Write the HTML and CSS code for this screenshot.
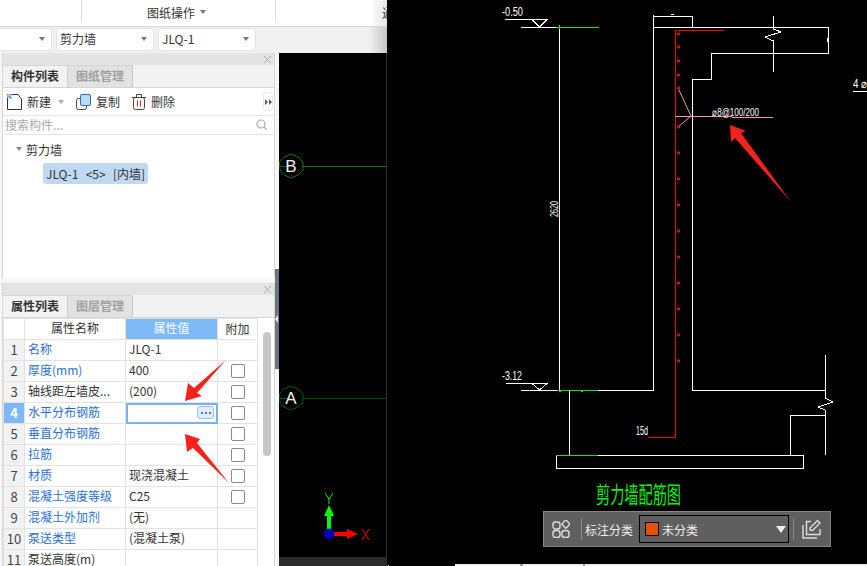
FILE: index.html
```html
<!DOCTYPE html>
<html lang="en">
<head>
    <meta charset="UTF-8">
    <title>剪力墙配筋</title>
    <link rel="stylesheet" href="styles.css">
</head>
<body>
    <div class="app">
        <div class="left-pane">
            <div class="menu-bar">
                <div class="menu-group menu-first"></div>
                <div class="menu-group menu-second">图纸操作<span class="caret caret-menu"></span></div>
                <div class="menu-group menu-third"><span class="menu-cut">通</span></div>
            </div>
            <div class="select-bar">
                <div class="select select-first"><span class="caret"></span></div>
                <div class="select"><span>剪力墙</span><span class="caret"></span></div>
                <div class="select"><span>JLQ-1</span><span class="caret"></span></div>
            </div>
            <div class="work-area">
                <div class="side">
                    <section class="panel panel-list">
                        <div class="panel-head">
                            <svg width="7" height="7" viewBox="0 0 7 7"><path d="M0 0l7 7M7 0L0 7" stroke="#aaa"/></svg>
                        </div>
                        <div class="tabs">
                            <div class="tab active">构件列表</div>
                            <div class="tab">图纸管理</div>
                        </div>
                        <div class="tools">
                            <div class="tool">
                                <svg class="tool-icon" width="15" height="16" viewBox="0 0 15 16">
                                    <path d="M.5 4V15.5H14.5V5L11 .5H5" fill="none" stroke="#333"/>
                                    <path d="M0 0h1.5v1.5H0zM3 0h1.5v1.5H3zM1.5 1.5H3V3H1.5zM0 3h1.5v1.5H0zM3 3h1.5v1.5H3z" fill="#3b7fd9"/>
                                    <path d="M1.5 0H3v1.5H1.5zM0 1.5h1.5V3H0zM3 1.5h1.5V3H3zM1.5 3H3v1.5H1.5z" fill="#a9c8f0"/>
                                </svg>
                                <span>新建</span><span class="caret caret-tool"></span>
                            </div>
                            <div class="tool">
                                <svg class="tool-icon" width="15" height="16" viewBox="0 0 15 16">
                                    <rect x="0.5" y="4.5" width="10" height="11" rx="2" fill="#fff" stroke="#444"/>
                                    <rect x="4.5" y="0.5" width="10" height="11" rx="1.5" fill="#bcd9f7" stroke="#2a6fc9"/>
                                </svg>
                                <span>复制</span>
                            </div>
                            <div class="tool">
                                <svg class="tool-icon" width="14" height="16" viewBox="0 0 14 16">
                                    <path d="M0 3.5h14M4.5 3V.5h5V3" fill="none" stroke="#444"/>
                                    <rect x="1.5" y="3.5" width="11" height="12" rx="2" fill="none" stroke="#444"/>
                                    <path d="M5.5 6.5v6M8.5 6.5v6" stroke="#e02020"/>
                                </svg>
                                <span>删除</span>
                            </div>
                            <div class="more">
                                <svg width="7" height="6" viewBox="0 0 7 6"><path d="M0 0l3 3-3 3zM4 0l3 3-3 3z" fill="#555"/></svg>
                            </div>
                        </div>
                        <div class="search">
                            <span>搜索构件...</span>
                            <svg width="11" height="11" viewBox="0 0 11 11">
                                <circle cx="5" cy="5" r="4" fill="none" stroke="#aaa" stroke-width="1.2"/>
                                <path d="M8 8l2.5 2.5" stroke="#aaa" stroke-width="1.2"/>
                            </svg>
                        </div>
                        <div class="tree">
                            <div class="tree-root"><span class="caret caret-tree"></span>剪力墙</div>
                            <div class="tree-item">JLQ-1 &nbsp;&lt;5&gt; &nbsp;[内墙]</div>
                        </div>
                    </section>
                    <section class="panel panel-props">
                        <div class="panel-head">
                            <svg width="7" height="7" viewBox="0 0 7 7"><path d="M0 0l7 7M7 0L0 7" stroke="#aaa"/></svg>
                        </div>
                        <div class="tabs">
                            <div class="tab active">属性列表</div>
                            <div class="tab">图层管理</div>
                        </div>
                        <div class="props">
                            <table class="prop-table">
                                <tr class="head-row">
                                    <th class="num"></th><th class="name">属性名称</th><th class="value current">属性值</th><th class="extra">附加</th>
                                </tr>
                                <tr><td class="num">1</td><td class="name link">名称</td><td class="value">JLQ-1</td><td></td></tr>
                                <tr><td class="num">2</td><td class="name link">厚度(mm)</td><td class="value">400</td><td class="extra"><span class="check"></span></td></tr>
                                <tr><td class="num">3</td><td class="name">轴线距左墙皮...</td><td class="value">(200)</td><td class="extra"><span class="check"></span></td></tr>
                                <tr>
                                    <td class="num current">4</td><td class="name link">水平分布钢筋</td>
                                    <td class="value editing">
                                        <span class="dots"><svg width="10" height="2" viewBox="0 0 10 2"><path d="M0 0h2v2H0zM4 0h2v2H4zM8 0h2v2H8z" fill="#3b7fd9"/></svg></span>
                                    </td>
                                    <td class="extra"><span class="check"></span></td>
                                </tr>
                                <tr><td class="num">5</td><td class="name link">垂直分布钢筋</td><td class="value"></td><td class="extra"><span class="check"></span></td></tr>
                                <tr><td class="num">6</td><td class="name link">拉筋</td><td class="value"></td><td class="extra"><span class="check"></span></td></tr>
                                <tr><td class="num">7</td><td class="name link">材质</td><td class="value">现浇混凝土</td><td class="extra"><span class="check"></span></td></tr>
                                <tr><td class="num">8</td><td class="name link">混凝土强度等级</td><td class="value">C25</td><td class="extra"><span class="check"></span></td></tr>
                                <tr><td class="num">9</td><td class="name link">混凝土外加剂</td><td class="value">(无)</td><td></td></tr>
                                <tr><td class="num">10</td><td class="name link">泵送类型</td><td class="value">(混凝土泵)</td><td></td></tr>
                                <tr><td class="num">11</td><td class="name">泵送高度(m)</td><td class="value"></td><td></td></tr>
                            </table>
                            <div class="scroll-track"><div class="scroll-thumb"></div></div>
                        </div>
                    </section>
                </div>
                <div class="splitter">
                    <div class="splitter-grip"><span class="grip-arrow"></span></div>
                </div>
                <div class="axis-view">
                    <svg class="axis-svg" viewBox="279 53 108 513" width="108" height="513">
                        <path d="M302 166.5H386" stroke="#0a7a0a"/>
                        <path d="M302 398.5H386" stroke="#0a4a0a"/>
                        <path d="M386.5 53V557" stroke="#143a20"/>
                        <path d="M280 166.5h11M280 398.5h11" stroke="#0a6a0a"/>
                        <polygon points="291,154 298,157 303,162 303,170 298,175 291,178 284,175 280,170 279.5,162 284,157" fill="none" stroke="#0a7a0a"/>
                        <polygon points="291,386 298,389 303,394 303,402 298,407 291,410 284,407 280,402 279.5,394 284,389" fill="none" stroke="#0a5a0a"/>
                        <text x="291" y="172" class="axis-label">B</text>
                        <text x="291" y="404" class="axis-label">A</text>
                        <rect x="331" y="532" width="18" height="4" fill="#f00"/>
                        <path d="M347 529l11 5-11 5z" fill="#f00"/>
                        <rect x="327" y="514" width="4" height="17" fill="#0f0"/>
                        <path d="M329 505l5 11h-10z" fill="#0f0"/>
                        <circle cx="329" cy="534" r="5.5" fill="#0000b0"/>
                        <path d="M325 493l4 6 4-6M329 499v5" fill="none" stroke="#0f0"/>
                        <path d="M362 529l7 11M369 529l-7 11" fill="none" stroke="#f00"/>
                        <rect x="279" y="557" width="108" height="9" fill="#2b2b2b"/>
                    </svg>
                </div>
            </div>
        </div>
        <div class="cad-view">
            <svg class="cad-svg" viewBox="387 0 480 566" width="480" height="566">
                <g class="line-white">
                    <path d="M505 19.5H547L539.5 27L532 19.5"/>
                    <path d="M521 27.5H560M559.5 27V390M653.5 15V390M521 390.5H653.5"/>
                    <path d="M653 16.5H692.5V27M653 27.5H828.5V53.5H711.5V79.5H692.5V390.5H825"/>
                    <path d="M773.5 16V29L781 32L765 37L773.5 41V72"/>
                    <path d="M506 383.5H547L539.5 390L532 383.5"/>
                    <path d="M569.5 390V455"/>
                    <rect x="556.5" y="455.5" width="247" height="13"/>
                    <path d="M790.5 455V415.5H825M825 355V398L833 402L818 407L825 410V455"/>
                    <path d="M853 91.5H867"/>
                    <path d="M671 14.5h3M827 38v4"/>
                </g>
                <g class="line-green">
                    <path d="M556 27.5H599M557 390.5H598M556 455.5H598M559 25v4M558 390l3 2M580 390l3 2"/>
                </g>
                <g class="line-red">
                    <path d="M724 30.5H675.5V437.5H648"/>
                </g>
                <g class="line-pink">
                    <path d="M678 88L691 116L678 127M675 116.5H732M732 117.5H773"/>
                </g>
                <g class="rebar-dots">
                    <circle cx="678.5" cy="34" r="1.2"/><circle cx="678.5" cy="47" r="1.2"/>
                    <circle cx="678.5" cy="61" r="1.2"/><circle cx="678.5" cy="75" r="1.2"/>
                    <circle cx="678.5" cy="88" r="1.2"/><circle cx="678.5" cy="127" r="1.2"/>
                    <circle cx="678.5" cy="153" r="1.2"/><circle cx="678.5" cy="179" r="1.2"/>
                    <circle cx="678.5" cy="205" r="1.2"/><circle cx="678.5" cy="231" r="1.2"/>
                    <circle cx="678.5" cy="257" r="1.2"/><circle cx="678.5" cy="283" r="1.2"/>
                    <circle cx="678.5" cy="309" r="1.2"/><circle cx="678.5" cy="335" r="1.2"/>
                    <circle cx="678.5" cy="361" r="1.2"/>
                </g>
                <g class="cad-text">
                    <text x="502" y="16" textLength="21" lengthAdjust="spacingAndGlyphs">-0.50</text>
                    <text x="502" y="380" textLength="20" lengthAdjust="spacingAndGlyphs">-3.12</text>
                    <text x="712" y="115.5" class="cad-small" textLength="47" lengthAdjust="spacingAndGlyphs">⌀8@100/200</text>
                    <text x="636" y="435" textLength="12" lengthAdjust="spacingAndGlyphs">15d</text>
                    <text x="853" y="88" textLength="14" lengthAdjust="spacingAndGlyphs">4 ⌀</text>
                    <text transform="translate(558 217) rotate(-90)" class="cad-small" textLength="16" lengthAdjust="spacingAndGlyphs">2620</text>
                </g>
                <text class="cad-title" x="596" y="503" textLength="85" lengthAdjust="spacingAndGlyphs">剪力墙配筋图</text>
                <polygon points="730,125 746,131 741,133 791,202 735,138 731,142" fill="#f5211b"/>
                <rect x="455" y="564" width="412" height="2" fill="#eeeeee"/>
                <path d="M520 564h3v2h-3zM583 564h2v2h-2z" fill="#999"/>
                <rect x="388" y="565" width="1" height="1" fill="#ddd"/>
            </svg>
            <div class="mark-bar">
                <svg class="bar-icon" width="18" height="18" viewBox="0 0 18 18">
                    <g fill="none" stroke="#ddd" stroke-width="1.4">
                        <rect x="1" y="2" width="7" height="7" rx="2.5"/>
                        <rect x="10.5" y="1" width="6" height="6" rx="1" transform="rotate(45 13.5 4.5)"/>
                        <rect x="1" y="10.5" width="7" height="7" rx="2.5"/>
                        <rect x="10" y="10.5" width="7" height="7" rx="2.5"/>
                    </g>
                </svg>
                <span class="bar-sep"></span>
                <span class="bar-label">标注分类</span>
                <div class="bar-select">
                    <span class="swatch"></span>
                    <span class="bar-value">未分类</span>
                    <span class="bar-caret"></span>
                </div>
                <span class="bar-sep"></span>
                <svg class="bar-icon" width="20" height="20" viewBox="0 0 20 20">
                    <g fill="none" stroke="#ddd" stroke-width="1.4">
                        <path d="M9 2.5H4.5V15.5H18V10"/>
                        <path d="M1 6V19H15"/>
                        <path d="M8 11V9L15.5 1.5L18 4L10.5 11.5Z"/>
                    </g>
                </svg>
            </div>
        </div>
        <svg class="arrows" viewBox="0 0 867 566" width="867" height="566">
            <polygon points="185,401 188,383 194,388 226,360 197,393 202,396" fill="#f5211b"/>
            <polygon points="185,434 200,439 197,443 229,483 193,448 187,452" fill="#f5211b"/>
        </svg>
    </div>
</body>
</html>
```

FILE: styles.css
```css
* {
    box-sizing: border-box;
}

body {
    margin: 0;
    width: 867px;
    height: 566px;
    overflow: hidden;
    font-family: "Noto Sans CJK SC", "Noto Sans", sans-serif;
    font-size: 12px;
    color: #333;
    background: #000;
}

.app {
    position: relative;
    display: flex;
    width: 867px;
    height: 566px;
}

.left-pane {
    width: 387px;
    height: 566px;
    display: flex;
    flex-direction: column;
    flex: none;
    overflow: hidden;
}

.menu-bar {
    height: 27px;
    flex: none;
    display: flex;
    background: linear-gradient(to right, #fff 370px, #e4e4e4 387px);
    border-bottom: 1px solid #d8d8d8;
}

.menu-group {
    height: 22px;
    display: flex;
    align-items: center;
    border-right: 1px solid #dcdcdc;
}

.menu-first {
    width: 82px;
}

.menu-second {
    width: 194px;
    padding-left: 65px;
    padding-top: 2px;
}

.menu-third {
    flex: 1;
    border-right: none;
    justify-content: flex-end;
    padding-top: 2px;
}

.menu-cut {
    width: 5px;
    overflow: hidden;
    white-space: nowrap;
}

.caret {
    display: inline-block;
    width: 0;
    height: 0;
    border-left: 3.5px solid transparent;
    border-right: 3.5px solid transparent;
    border-top: 4px solid #777;
}

.caret-menu {
    margin-left: 5px;
}

.select-bar {
    height: 26px;
    flex: none;
    display: flex;
    gap: 4px;
    padding-top: 1px;
    background: linear-gradient(to right, #f0f0f0 370px, #c4c4c4 387px);
}

.select {
    width: 98px;
    height: 23px;
    padding: 0 6px 2px 3px;
    display: flex;
    align-items: center;
    justify-content: space-between;
    background: #fff;
    border: 1px solid #e2e2e2;
    border-radius: 4px;
}

.select-first {
    width: 52px;
    justify-content: flex-end;
    border-left: none;
    border-radius: 0 4px 4px 0;
}

.work-area {
    flex: 1;
    display: flex;
    min-height: 0;
}

.side {
    width: 275px;
    flex: none;
    padding-left: 2px;
    display: flex;
    flex-direction: column;
    gap: 5px;
    background: #f6f6f6;
}

.panel {
    display: flex;
    flex-direction: column;
    background: #fff;
    border-right: 1px solid #d6d6d6;
    border-left: 1px solid #d6d6d6;
    overflow: hidden;
}

.panel-list {
    height: 225px;
    flex: none;
}

.panel-props {
    flex: 1;
    min-height: 0;
}

.panel-head {
    height: 12px;
    flex: none;
    display: flex;
    justify-content: flex-end;
    align-items: center;
    padding-right: 3px;
    background: #e4e4e4;
}

.tabs {
    height: 23px;
    flex: none;
    display: flex;
    background: #f2f2f2;
    border-bottom: 1px solid #d6d6d6;
}

.tab {
    width: 65px;
    padding-bottom: 2px;
    display: flex;
    align-items: center;
    justify-content: center;
    font-weight: 700;
    color: #a0a0a0;
    background: #e2e2e2;
    border-right: 1px solid #c8c8c8;
    border-top: 1px solid #d6d6d6;
}

.tab.active {
    color: #333;
    background: #f2f2f2;
    border-right: 1px solid #d0d0d0;
}

.tools {
    height: 28px;
    flex: none;
    display: flex;
    align-items: center;
    padding-left: 4px;
    gap: 12px;
    border-bottom: 1px solid #e4e4e4;
}

.tool {
    display: flex;
    align-items: center;
    gap: 5px;
}

.caret-tool {
    margin-left: 2px;
    border-top-color: #aaa;
}

.more {
    width: 10px;
    height: 19px;
    margin-left: auto;
    margin-right: 1px;
    display: flex;
    align-items: center;
    justify-content: center;
    border: 1px solid #e8e8e8;
    border-radius: 3px;
}

.search {
    height: 19px;
    flex: none;
    display: flex;
    align-items: center;
    justify-content: space-between;
    padding: 0 7px 2px 2px;
    color: #aaa;
    border-bottom: 1px solid #e4e4e4;
}

.tree {
    flex: 1;
    padding-top: 5px;
}

.tree-root {
    height: 20px;
    padding: 0 0 2px 13px;
    display: flex;
    align-items: center;
}

.caret-tree {
    margin-right: 4px;
    border-top-color: #888;
}

.tree-item {
    width: 105px;
    height: 21px;
    margin: 3px 0 0 40px;
    padding: 0 0 1px 3px;
    display: flex;
    align-items: center;
    white-space: nowrap;
    word-spacing: 1px;
    border-radius: 3px;
    background: #bfd9f2;
}

.props {
    position: relative;
    flex: 1;
    display: flex;
    min-height: 0;
    overflow: hidden;
}

.prop-table {
    width: 255px;
    flex: none;
    table-layout: fixed;
    border-collapse: collapse;
    align-self: flex-start;
}

.prop-table tr {
    height: 21px;
}

.prop-table th,
.prop-table td {
    padding: 0 3px 2px;
    font-weight: 400;
    white-space: nowrap;
    border: 1px solid #e2e2e2;
    line-height: 18px;
}

.prop-table .num {
    width: 21px;
    padding: 0 0 1px;
    text-align: center;
    font-size: 13px;
    color: #444;
    background: #f2f2f2;
}

.prop-table th.num {
    background: #fff;
}

.prop-table .name {
    width: 101px;
}

.prop-table th.name {
    text-align: center;
}

.prop-table .value {
    width: 92px;
}

.prop-table th.current {
    text-align: center;
    color: #fff;
    background: #7db9f7;
}

.prop-table td.num.current {
    font-weight: 700;
    color: #fff;
    background: #7db9f7;
}

.prop-table .extra {
    text-align: center;
    padding: 0;
}

.link {
    color: #2a6fd6;
}

.editing {
    position: relative;
    outline: 2px solid #76b2ef;
    outline-offset: -2px;
}

.dots {
    position: absolute;
    right: 3px;
    top: 3px;
    width: 17px;
    height: 13px;
    display: flex;
    align-items: center;
    justify-content: center;
    background: #e4eefa;
    border: 1px solid #9dbfe8;
    border-radius: 3px;
}

.check {
    display: block;
    width: 14px;
    height: 14px;
    margin: 0 auto;
    background: #fff;
    border: 1px solid #888;
    border-radius: 2px;
}

.scroll-track {
    flex: 1;
    padding: 14px 3px 0 5px;
}

.scroll-thumb {
    height: 124px;
    border-radius: 4px;
    background: #c6c6c6;
}

.splitter {
    width: 4px;
    flex: none;
    padding-top: 216px;
    background: #f6f6f6;
}

.splitter-grip {
    width: 4px;
    height: 100px;
    display: flex;
    align-items: center;
    background: #6b7680;
}

.grip-arrow {
    width: 0;
    height: 0;
    border-top: 4px solid transparent;
    border-bottom: 4px solid transparent;
    border-right: 3px solid #e8e8e8;
}

.axis-view {
    width: 108px;
    flex: none;
    background: #000;
}

.axis-svg,
.cad-svg {
    display: block;
}

.axis-label {
    font-family: "Liberation Sans", sans-serif;
    font-size: 17px;
    fill: #eee;
    text-anchor: middle;
}

.cad-view {
    position: relative;
    flex: 1;
    background: #000;
}

.line-white {
    fill: none;
    stroke: #fff;
    shape-rendering: crispEdges;
}

.line-green {
    fill: none;
    stroke: #19e619;
    shape-rendering: crispEdges;
}

.line-red {
    fill: none;
    stroke: #f00;
    shape-rendering: crispEdges;
}

.line-pink {
    fill: none;
    stroke: #f598a8;
}

.rebar-dots {
    fill: #400;
    stroke: #ff2020;
}

.cad-text {
    font-family: "Liberation Sans", sans-serif;
    font-size: 12px;
    fill: #fff;
}

.cad-small {
    font-size: 11px;
}

.cad-title {
    font-size: 23px;
    fill: #10f010;
}

.mark-bar {
    position: absolute;
    left: 156px;
    top: 511px;
    width: 288px;
    height: 36px;
    display: flex;
    align-items: center;
    padding-left: 8px;
    color: #eee;
    background: #5f5f5f;
    border: 1px solid #868686;
}

.bar-sep {
    width: 1px;
    height: 22px;
    margin: 0 3px 0 11px;
    background: #8a8a8a;
}

.bar-label {
    width: 48px;
}

.bar-select {
    width: 150px;
    height: 28px;
    margin-left: 6px;
    padding-left: 5px;
    display: flex;
    align-items: center;
    border: 1px solid #000;
}

.swatch {
    width: 14px;
    height: 14px;
    background: #e65100;
    border: 1px solid #000;
}

.bar-value {
    margin-left: 3px;
}

.bar-caret {
    width: 0;
    height: 0;
    margin-left: auto;
    margin-right: 2px;
    border-left: 5px solid transparent;
    border-right: 5px solid transparent;
    border-top: 7px solid #eee;
}

.bar-select + .bar-sep {
    margin: 0 8px 0 4px;
}

.arrows {
    position: absolute;
    left: 0;
    top: 0;
    pointer-events: none;
}
```
